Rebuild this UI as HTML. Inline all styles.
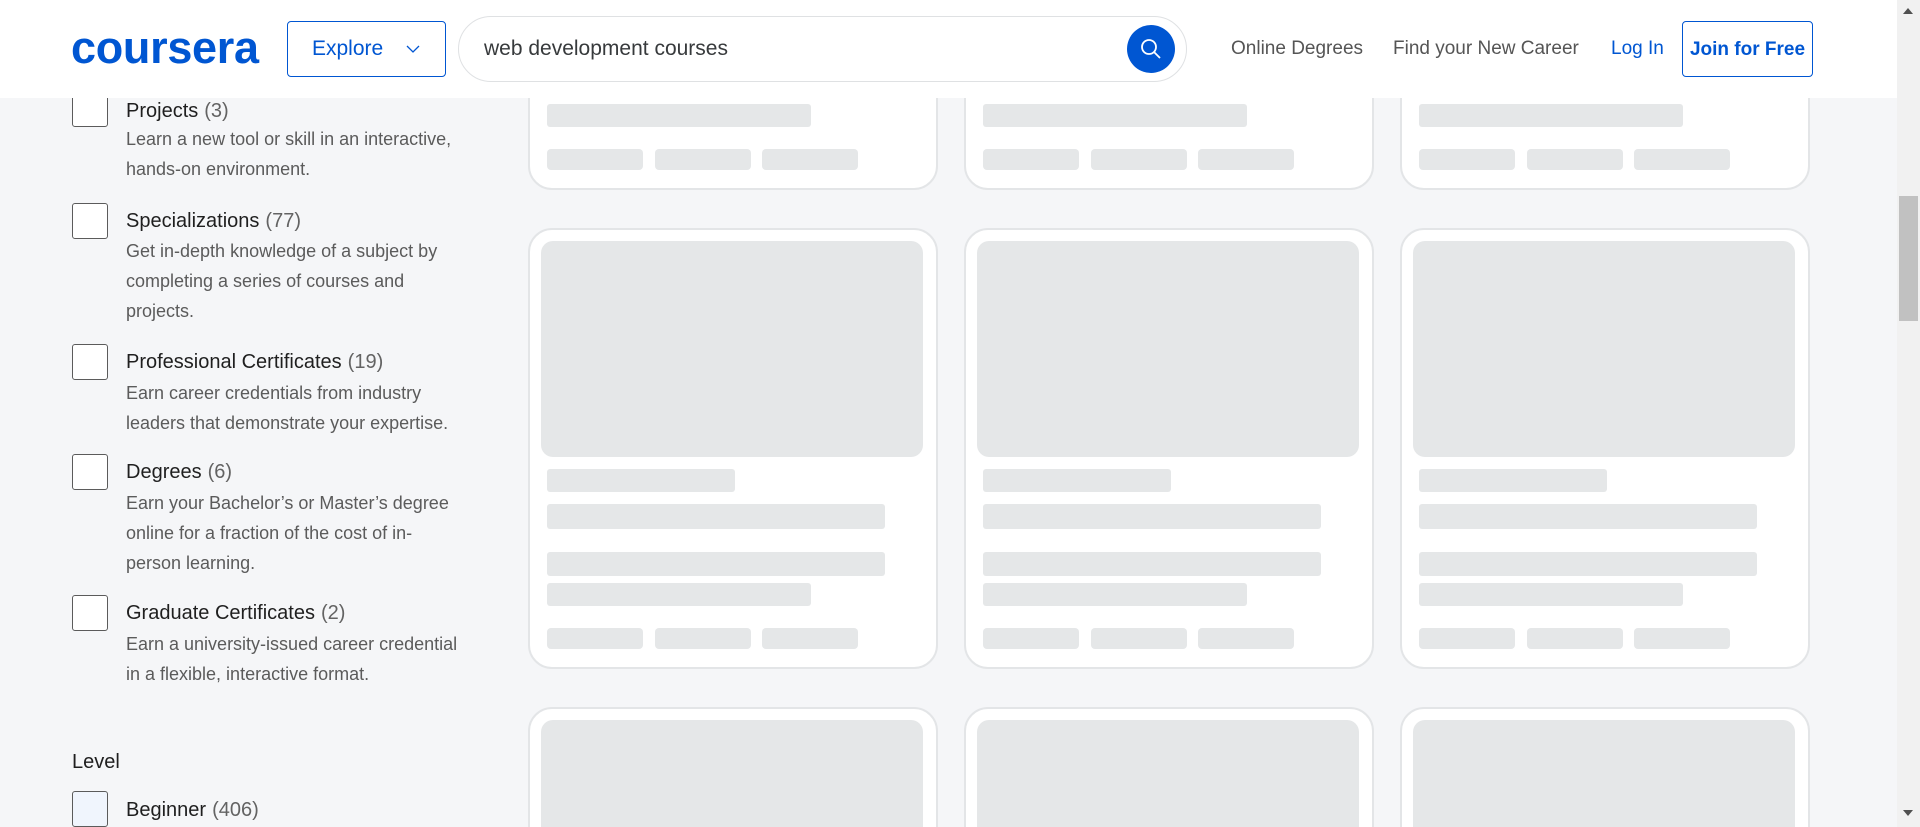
<!DOCTYPE html>
<html style="width:1920px;height:827px;overflow:hidden"><head><meta charset="utf-8"><style>
*{margin:0;padding:0;box-sizing:border-box}
body{width:1920px;height:827px;overflow:hidden;background:#f5f6f8;font-family:"Liberation Sans",sans-serif;position:relative}
.a{position:absolute}
#cards{position:absolute;left:0;top:0;width:1920px;height:827px;overflow:hidden}
.card{position:absolute;width:410px;height:441px;background:#fff;border:2px solid #e3e5e7;border-radius:24px}
.sk{position:absolute;background:#e5e7e8;border-radius:3px}
.cb{position:absolute;left:72px;width:36px;height:36px;border:1.5px solid #5b5b5b;border-radius:3px;background:#fff}
.t{position:absolute;left:126px;font-size:20px;color:#1f1f1f;line-height:30px}
.t span{color:#636363;margin-left:6px}
.d{position:absolute;left:126px;font-size:18px;color:#5b5b5b;line-height:30px;width:370px}
</style></head><body>

<div id="cards"></div>
<script>
var xs=[528,964,1400],ts=[-251,228,707],h='';
ts.forEach(function(T){xs.forEach(function(X){
h+='<div class="card" style="left:'+X+'px;top:'+T+'px">'+
'<div class="sk" style="left:11px;top:11px;width:382px;height:216px;border-radius:12px"></div>'+
'<div class="sk" style="left:17px;top:239px;width:188px;height:23px"></div>'+
'<div class="sk" style="left:17px;top:274px;width:338px;height:25px"></div>'+
'<div class="sk" style="left:17px;top:322px;width:338px;height:24px"></div>'+
'<div class="sk" style="left:17px;top:353px;width:264px;height:23px"></div>'+
'<div class="sk" style="left:17px;top:398px;width:96px;height:21px;border-radius:4px"></div>'+
'<div class="sk" style="left:125px;top:398px;width:96px;height:21px;border-radius:4px"></div>'+
'<div class="sk" style="left:232px;top:398px;width:96px;height:21px;border-radius:4px"></div>'+
'</div>';});});
document.getElementById('cards').innerHTML=h;
</script>

<div class="cb" style="top:91px"></div>
<div class="t" style="top:96px">Projects<span>(3)</span></div>
<div class="d" style="top:124px">Learn a new tool or skill in an interactive,<br>hands-on environment.</div>

<div class="cb" style="top:203px"></div>
<div class="t" style="top:206px">Specializations<span>(77)</span></div>
<div class="d" style="top:236px">Get in-depth knowledge of a subject by<br>completing a series of courses and<br>projects.</div>

<div class="cb" style="top:344px"></div>
<div class="t" style="top:347px">Professional Certificates<span>(19)</span></div>
<div class="d" style="top:378px">Earn career credentials from industry<br>leaders that demonstrate your expertise.</div>

<div class="cb" style="top:454px"></div>
<div class="t" style="top:457px">Degrees<span>(6)</span></div>
<div class="d" style="top:488px">Earn your Bachelor’s or Master’s degree<br>online for a fraction of the cost of in-<br>person learning.</div>

<div class="cb" style="top:595px"></div>
<div class="t" style="top:598px">Graduate Certificates<span>(2)</span></div>
<div class="d" style="top:629px">Earn a university-issued career credential<br>in a flexible, interactive format.</div>

<div class="a" style="left:72px;top:751px;font-size:20px;color:#1f1f1f">Level</div>
<div class="cb" style="top:791px;background:#f0f5fd"></div>
<div class="t" style="top:795px">Beginner<span>(406)</span></div>

<div class="a" style="left:0;top:0;width:1897px;height:98px;background:#fff"></div>
<div class="a" style="left:71px;top:22px;font-size:45px;font-weight:bold;color:#0056d2;letter-spacing:-0.3px">coursera</div>
<div class="a" style="left:287px;top:21px;width:159px;height:56px;border:1.5px solid #0056d2;border-radius:4px;color:#0056d2;font-size:21px;line-height:53px;padding-left:24px">Explore
<svg class="a" style="left:118px;top:23px" width="14" height="9" viewBox="0 0 14 9"><path d="M1 1l6 6 6-6" fill="none" stroke="#0056d2" stroke-width="1.3"/></svg></div>
<div class="a" style="left:458px;top:16px;width:729px;height:66px;border:1.5px solid #dfe1e3;border-radius:33px;font-size:21px;color:#373a3c;line-height:63px;padding-left:25px">web development courses</div>
<div class="a" style="left:1127px;top:25px;width:48px;height:48px;border-radius:50%;background:#0056d2"></div>
<svg class="a" style="left:1139px;top:37px" width="24" height="24" viewBox="0 0 24 24"><circle cx="10" cy="10" r="7" fill="none" stroke="#fff" stroke-width="1.8"/><path d="M15 15l6 6" stroke="#fff" stroke-width="1.8"/></svg>
<div class="a" style="left:1231px;top:38px;font-size:19px;color:#555">Online Degrees</div>
<div class="a" style="left:1393px;top:38px;font-size:19px;color:#555">Find your New Career</div>
<div class="a" style="left:1611px;top:38px;font-size:19px;color:#0056d2">Log In</div>
<div class="a" style="left:1682px;top:21px;width:131px;height:56px;border:1.5px solid #0056d2;border-radius:4px;color:#0056d2;font-size:19px;font-weight:bold;line-height:55px;text-align:center">Join for Free</div>

<div class="a" style="left:1897px;top:0;width:23px;height:827px;background:#f1f1f1"></div>
<div class="a" style="left:1899px;top:196px;width:19px;height:125px;background:#c1c1c1"></div>
<div class="a" style="left:1903px;top:8px;width:0;height:0;border-left:5px solid transparent;border-right:5px solid transparent;border-bottom:6px solid #505050"></div>
<div class="a" style="left:1903px;top:810px;width:0;height:0;border-left:5px solid transparent;border-right:5px solid transparent;border-top:6px solid #505050"></div>
</body></html>
